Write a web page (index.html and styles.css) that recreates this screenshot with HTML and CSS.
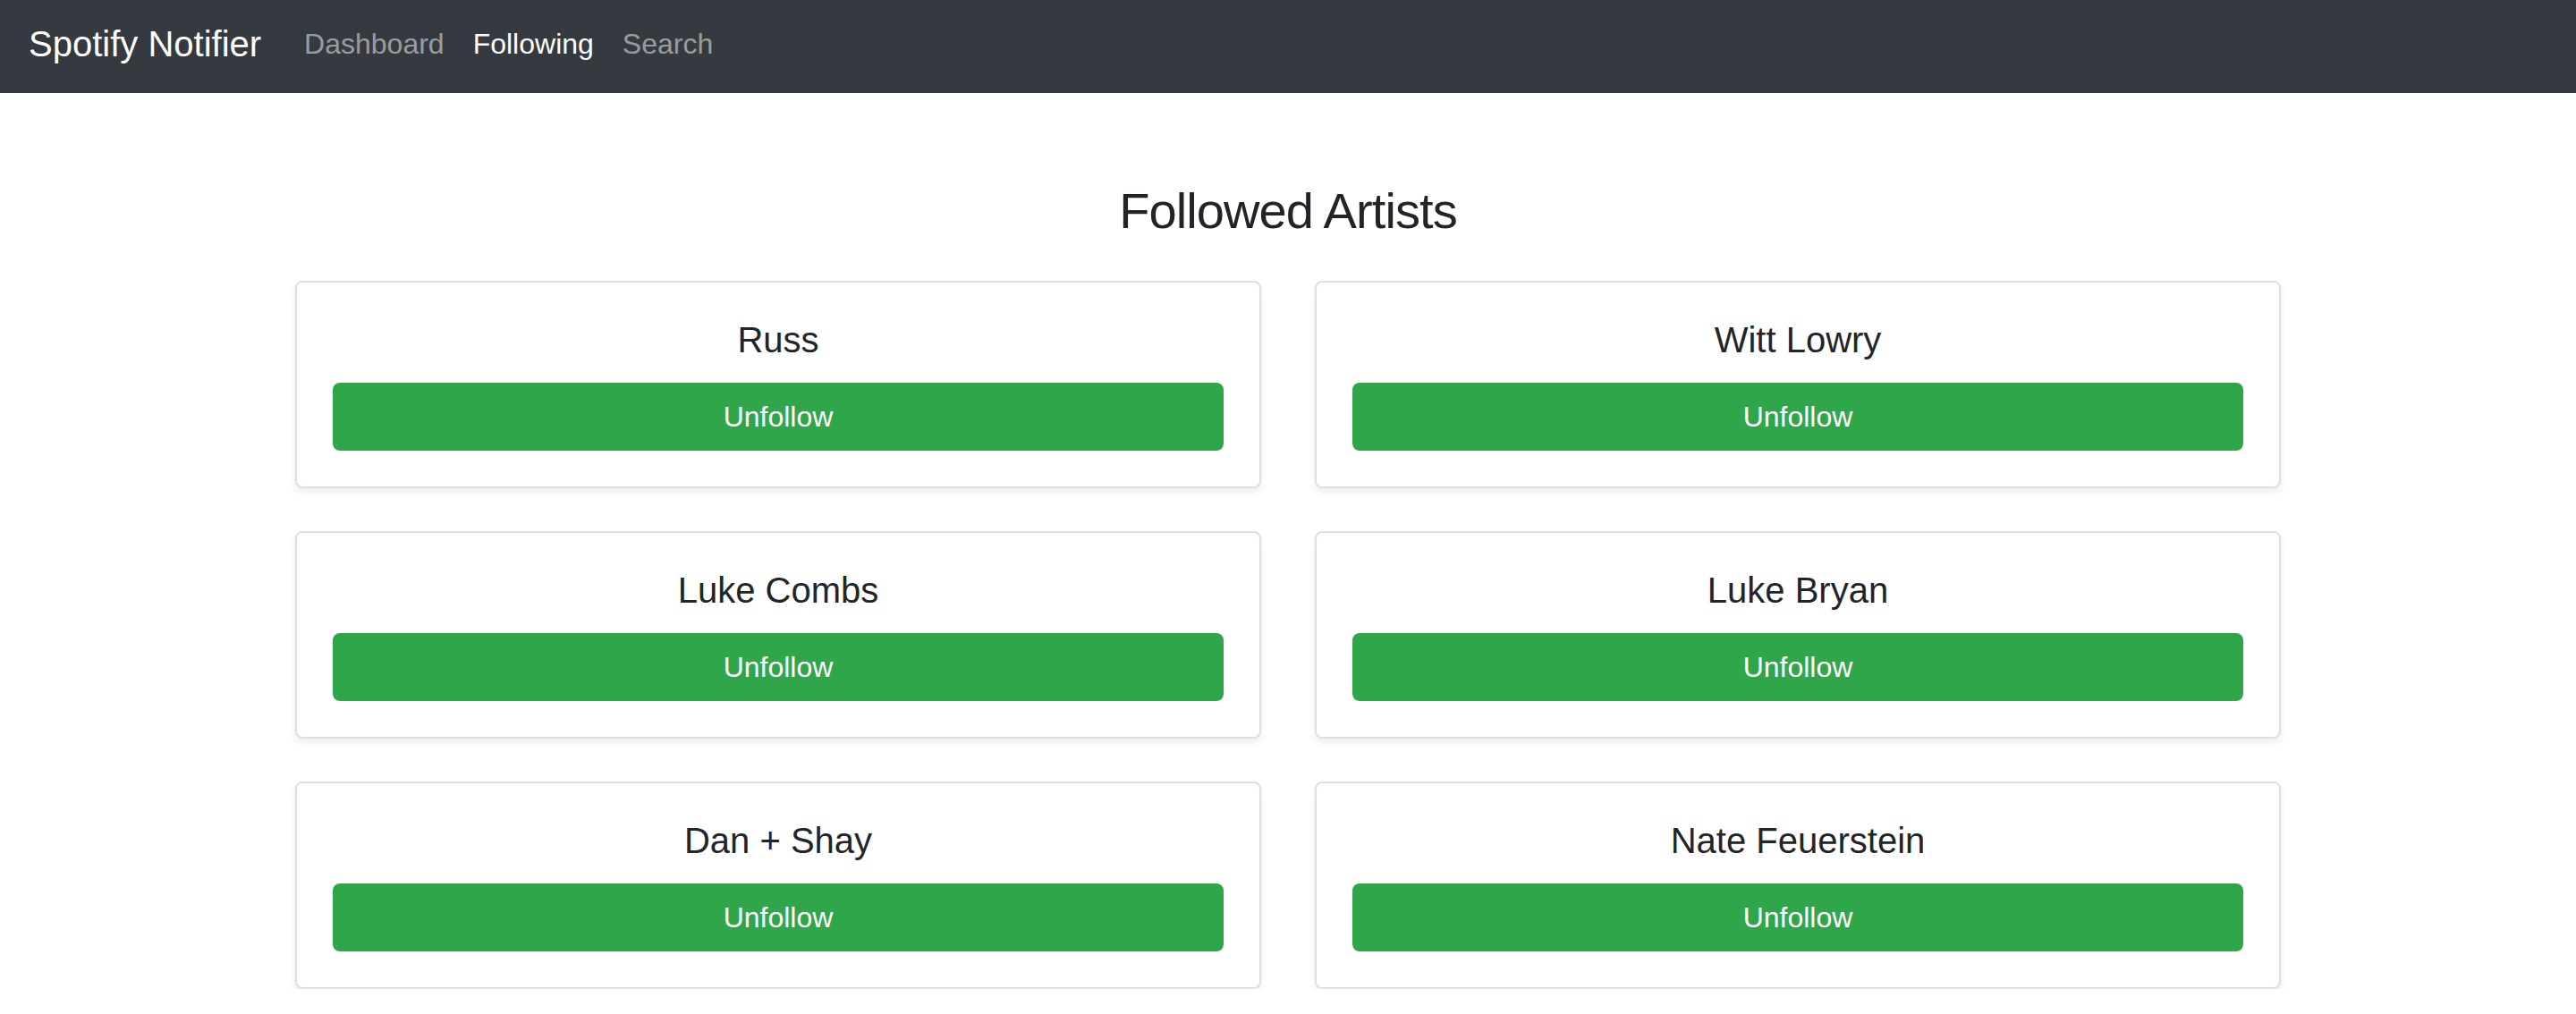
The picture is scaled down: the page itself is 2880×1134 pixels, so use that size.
FILE: index.html
```html
<!DOCTYPE html>
<html lang="en">
<head>
<meta charset="utf-8">
<title>Spotify Notifier</title>
<link rel="stylesheet" href="styles.css">
</head>
<body>
<nav class="navbar">
  <a class="brand" href="#">Spotify Notifier</a>
  <ul class="nav">
    <li><a class="nav-link" href="#">Dashboard</a></li>
    <li><a class="nav-link active" href="#">Following</a></li>
    <li><a class="nav-link" href="#">Search</a></li>
  </ul>
</nav>
<main class="container">
  <h3 class="page-title">Followed Artists</h3>
  <div class="grid">
    <div class="card"><h5 class="card-title">Russ</h5><button class="btn">Unfollow</button></div>
    <div class="card"><h5 class="card-title">Witt Lowry</h5><button class="btn">Unfollow</button></div>
    <div class="card"><h5 class="card-title">Luke Combs</h5><button class="btn">Unfollow</button></div>
    <div class="card"><h5 class="card-title">Luke Bryan</h5><button class="btn">Unfollow</button></div>
    <div class="card"><h5 class="card-title">Dan + Shay</h5><button class="btn">Unfollow</button></div>
    <div class="card"><h5 class="card-title">Nate Feuerstein</h5><button class="btn">Unfollow</button></div>
  </div>
</main>
</body>
</html>
```
FILE: styles.css
```css
* { box-sizing: border-box; }
html, body { margin: 0; padding: 0; }
body {
  font-family: "Liberation Sans", Arial, sans-serif;
  font-size: 32px;
  line-height: 1.5;
  color: #212529;
  background: #fff;
}
.navbar {
  display: flex;
  align-items: flex-start;
  height: 104px;
  padding: 19px 32px 0;
  background: #343a40;
}
.brand {
  font-size: 40px;
  color: #fff;
  text-decoration: none;
  margin-right: 32px;
  line-height: 60px;
}
.nav {
  display: flex;
  list-style: none;
  margin: 0;
  padding: 0;
}
.nav-link {
  display: block;
  padding: 6px 16px;
  color: rgba(255,255,255,.5);
  text-decoration: none;
  line-height: 48px;
}
.nav-link.active { color: #fff; }
.container {
  max-width: 2280px;
  margin: 0 auto;
  padding: 0 30px;
}
.page-title {
  font-size: 56px;
  font-weight: 400;
  line-height: 1.2;
  letter-spacing: -0.9px;
  text-align: center;
  margin: 98px 0 45px;
}
.grid {
  display: grid;
  grid-template-columns: 1fr 1fr;
  column-gap: 60px;
  row-gap: 48px;
}
.card {
  border: 2px solid rgba(0,0,0,.125);
  border-radius: 8px;
  padding: 40px;
  box-shadow: 0 4px 8px rgba(0,0,0,.075);
  text-align: center;
  display: flex;
  flex-direction: column;
}
.card-title {
  font-size: 40px;
  font-weight: 400;
  line-height: 48px;
  margin: 0 0 24px;
}
.btn {
  font-family: inherit;
  font-size: 32px;
  line-height: 48px;
  padding: 12px 24px;
  border: 2px solid #30a64b;
  border-radius: 8px;
  background: #30a64b;
  color: #fff;
  width: 100%;
  cursor: pointer;
}
```
